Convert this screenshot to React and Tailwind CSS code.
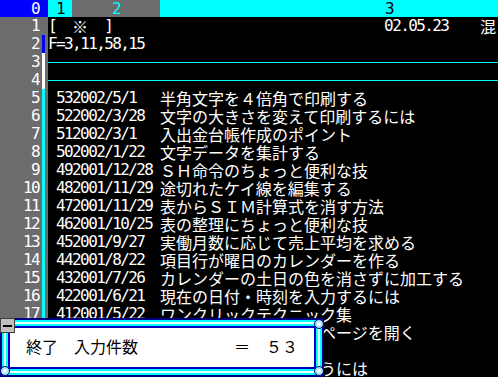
import React from "react";

const mono = "font-['DejaVu_Sans_Mono',monospace] text-[16px] tracking-[-1.6px]";
const jp = "font-['Noto_Sans_CJK_JP',sans-serif] text-[16px]";

const entries = [
  ["532002/5/1", "半角文字を４倍角で印刷する"],
  ["522002/3/28", "文字の大きさを変えて印刷するには"],
  ["512002/3/1", "入出金台帳作成のポイント"],
  ["502002/1/22", "文字データを集計する"],
  ["492001/12/28", "ＳＨ命令のちょっと便利な技"],
  ["482001/11/29", "途切れたケイ線を編集する"],
  ["472001/11/29", "表からＳＩＭ計算式を消す方法"],
  ["462001/10/25", "表の整理にちょっと便利な技"],
  ["452001/9/27", "実働月数に応じて売上平均を求める"],
  ["442001/8/22", "項目行が曜日のカレンダーを作る"],
  ["432001/7/26", "カレンダーの土日の色を消さずに加工する"],
  ["422001/6/21", "現在の日付・時刻を入力するには"],
  ["412001/5/22", "ワンクリックテクニック集"],
];

// rows hidden behind the dialog: only the part right of it shows
const tails = ["ページを開く", "", "うには"];

const Row = ({ n, bar, children }) => (
  <div className="flex h-[18px] leading-[18px]">
    <div className="w-[48px] shrink-0 flex bg-[#6c6c6c]">
      <span className={`w-[40px] text-right pr-[1px] ${mono}`}>{n}</span>
      <span className="w-[2px]" />
      <span className={`w-[3px] ${bar}`} />
    </div>
    <div className="flex-1 relative flex whitespace-pre">{children}</div>
  </div>
);

const Knob = ({ className }) => (
  <span
    className={`absolute w-[10px] h-[10px] rounded-full bg-[#9fe6ff] border border-[#000080] flex items-center justify-center ${className}`}
  >
    <span className="w-[4px] h-[4px] rounded-full bg-white" />
  </span>
);

export default function App() {
  return (
    <div className="relative w-[498px] h-[377px] overflow-hidden bg-black text-white">
      {/* column header */}
      <div className={`flex h-[17px] leading-[17px] ${mono}`}>
        <div className="w-[48px] bg-[#0000ff] text-right pr-[9px]">0</div>
        <div className="w-[24px] bg-[#00ffff] text-black text-center">1</div>
        <div className="w-[88px] bg-[#6c6c6c] text-[#00ffff] text-center">2</div>
        <div className="flex-1 bg-[#00ffff] text-black pl-[225px]">3</div>
      </div>

      <Row n="1" bar="">
        <span className={mono}>{"[  "}</span>
        <span className={`w-[16px] ${jp}`}>※</span>
        <span className={`w-[296px] ${mono}`}>{"  ]"}</span>
        <span className={`w-[96px] ${mono}`}>02.05.23</span>
        <span className={jp}>混</span>
      </Row>
      <Row n="2" bar="bg-[#0000ff]">
        <span className={mono}>F=3,11,58,15</span>
      </Row>
      <Row n="3" bar="bg-white">
        <span className="absolute left-0 right-0 top-[9px] h-px bg-[#00ffff]" />
      </Row>
      <Row n="4" bar="bg-white">
        <span className="absolute left-0 right-0 top-[9px] h-px bg-[#00ffff]" />
      </Row>
      {entries.map(([date, title], i) => (
        <Row key={i} n={String(i + 5)} bar="bg-[#00ffff]">
          <span className="w-[8px]" />
          <span className={`w-[104px] ${mono}`}>{date}</span>
          <span className={jp}>{title}</span>
        </Row>
      ))}
      {tails.map((t, i) => (
        <div key={i} className="flex h-[18px] leading-[18px] pl-[320px]">
          <span className={jp}>{t}</span>
        </div>
      ))}

      {/* result dialog */}
      <div className="absolute left-0 top-[318px] w-[324px] h-[59px]">
        <div className="h-full border-2 border-[#000080]">
          <div className="h-full border-2 border-[#00ffff]">
            <div className="h-full border-2 border-[#e6ffff]">
              <div className="h-full border-2 border-[#00ffff]">
                <div className="h-full border-2 border-[#0000c0] bg-white flex items-center pl-[16px] pb-[4px]">
                  <span className={`text-black leading-[18px] whitespace-pre ${jp}`}>
                    終了　入力件数　　　　　　＝　５３
                  </span>
                </div>
              </div>
            </div>
          </div>
        </div>
        <div className="absolute left-0 top-0 w-[15px] h-[15px] bg-[#c0c0c0] border border-[#404040] flex items-center justify-center">
          <span className="w-[9px] h-[2px] bg-black" />
        </div>
        <Knob className="right-0 top-[1px]" />
        <Knob className="right-0 bottom-[1px]" />
        <Knob className="left-0 bottom-[1px]" />
      </div>
    </div>
  );
}
